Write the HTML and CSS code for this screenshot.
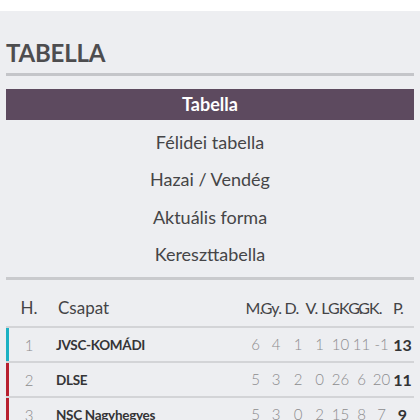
FILE: index.html
```html
<!DOCTYPE html>
<html lang="hu">
<head>
<meta charset="utf-8">
<title>Tabella</title>
<link rel="stylesheet" href="styles.css">
</head>
<body>
<div class="page">
  <h1 class="title">TABELLA</h1>
  <ul class="menu">
    <li class="item active">Tabella</li>
    <li class="item">Félidei tabella</li>
    <li class="item">Hazai / Vendég</li>
    <li class="item">Aktuális forma</li>
    <li class="item">Kereszttabella</li>
  </ul>
  <div class="table">
    <div class="head">
      <span class="rank">H.</span>
      <span class="team">Csapat</span>
      <div class="hstats">
        <span>M.</span><span>Gy.</span><span>D.</span><span>V.</span><span>LG.</span><span>KG.</span><span>GK.</span><span>P.</span>
      </div>
    </div>
    <div class="row">
      <span class="bar teal"></span>
      <span class="rank">1</span>
      <span class="team">JVSC-KOMÁDI</span>
      <div class="stats"><span>6</span><span>4</span><span>1</span><span>1</span><span>10</span><span>11</span><span>-1</span><span class="pts">13</span></div>
    </div>
    <div class="row">
      <span class="bar red"></span>
      <span class="rank">2</span>
      <span class="team">DLSE</span>
      <div class="stats"><span>5</span><span>3</span><span>2</span><span>0</span><span>26</span><span>6</span><span>20</span><span class="pts">11</span></div>
    </div>
    <div class="row">
      <span class="bar red"></span>
      <span class="rank">3</span>
      <span class="team">NSC Nagyhegyes</span>
      <div class="stats"><span>5</span><span>3</span><span>0</span><span>2</span><span>15</span><span>8</span><span>7</span><span class="pts">9</span></div>
    </div>
  </div>
</div>
</body>
</html>
```
FILE: styles.css
```css
html, body {
  margin: 0;
  padding: 0;
  background: #ffffff;
  font-family: Lato, "Open Sans", sans-serif;
}
.page {
  margin-top: 11px;
  background: #edeef1;
  padding: 27px 6px 0;
  min-height: 420px;
}
.title {
  margin: 0;
  font-size: 24px;
  line-height: 30px;
  font-weight: 700;
  letter-spacing: -0.2px;
  color: #4d4d4f;
  padding-bottom: 5px;
  border-bottom: 3px solid #c4c5c9;
}
.menu {
  list-style: none;
  margin: 13px 0 0;
  padding: 0 0 7px;
  display: flex;
  flex-direction: column;
  gap: 6.5px;
  border-bottom: 3px solid #c9cacd;
}
.item {
  height: 31px;
  line-height: 31px;
  text-align: center;
  font-size: 18px;
  color: #454547;
}
.item.active {
  background: #5d4a5f;
  color: #ffffff;
  font-weight: 700;
}
.head, .row {
  display: grid;
  grid-template-columns: 3px 40px 1fr 168px;
  align-items: center;
}
.head {
  height: 46px;
  padding-top: 18px;
  box-sizing: border-box;
  align-items: start;
  font-size: 17px;
  line-height: 20px;
  color: #444446;
}
.head .rank {
  grid-column: 2;
  text-align: center;
}
.head .team {
  padding-left: 9px;
}
.hstats {
  display: grid;
  grid-template-columns: 16px 18px 23px 17px 23px 15px 24px 32px;
  font-size: 16px;
  letter-spacing: -0.8px;
}
.hstats span {
  display: flex;
  justify-content: center;
  white-space: nowrap;
}
.row {
  height: 35px;
  border-top: 2px solid #d3d4d7;
  box-sizing: border-box;
}
.bar {
  align-self: stretch;
}
.teal { background: #1cb1c3; }
.red { background: #b71f2e; }
.row .rank {
  text-align: center;
  font-size: 15px;
  color: #8c8c8e;
  font-weight: 300;
}
.row .team {
  padding-left: 7px;
  font-size: 13.5px;
  letter-spacing: -0.3px;
  font-weight: 700;
  color: #343436;
}
.stats {
  display: grid;
  grid-template-columns: 19px 22px 22px 21px 21px 21px 19px 23px;
}
.stats span {
  text-align: center;
  font-size: 15px;
  color: #8c8c8e;
  font-weight: 300;
  white-space: nowrap;
}
.stats .pts {
  font-weight: 700;
  color: #333335;
  font-size: 16px;
}
```
